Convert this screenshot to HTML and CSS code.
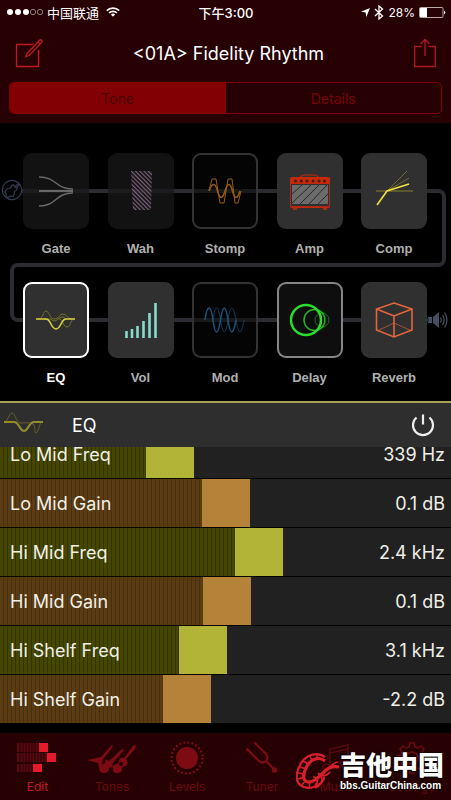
FILE: index.html
```html
<!DOCTYPE html>
<html lang="en">
<head>
    <meta charset="utf-8">
    <meta name="viewport" content="width=device-width, initial-scale=1">
    <title>Fidelity Rhythm</title>
    <link rel="stylesheet" href="styles.css">
</head>
<body>
<div class="app">
    <header class="top">
        <div class="status">
            <div class="status-left">
                <svg width="38" height="8" viewBox="0 0 38 8"><g fill="#fff"><circle cx="4" cy="4" r="3"/><circle cx="12" cy="4" r="3"/><circle cx="20" cy="4" r="3"/></g><g fill="none" stroke="#a99" stroke-width=".8"><circle cx="27" cy="4" r="2.7"/><circle cx="34" cy="4" r="2.7"/></g></svg>
                <span>中国联通</span>
                <svg class="wifi" width="14" height="10" viewBox="0 0 14 10"><g fill="none" stroke="#fff" stroke-width="1.7"><path d="M.8 3.6a8.8 8.8 0 0 1 12.4 0"/><path d="M3.1 6a5.5 5.5 0 0 1 7.8 0"/></g><path d="M4.9 7.6a3 3 0 0 1 4.2 0L7 9.8z" fill="#fff"/></svg>
            </div>
            <b class="time">下午3:00</b>
            <div class="status-right">
                <svg width="9" height="9" viewBox="0 0 9 9"><path d="M9 0 5.3 9 4.6 4.5 0 3.7z" fill="#fff"/></svg>
                <svg width="10" height="15" viewBox="0 0 10 15"><path d="M1 4l7.5 7L5 14V1l3.500 3L1 11" fill="none" stroke="#fff" stroke-width="1.3"/></svg>
                <span>28%</span>
                <svg width="27" height="11" viewBox="0 0 27 11"><rect x=".5" y=".5" width="23.500" height="10" rx="1" fill="none" stroke="#b9a9a9"/><path d="M1 1h7v9H1z" fill="#fff"/><path d="M25 3.500q2.500 2 0 4z" fill="#fff"/></svg>
            </div>
        </div>
        <div class="title-bar">
            <button class="icon-btn" aria-label="Edit name">
                <svg width="30" height="30" viewBox="0 0 30 30"><g fill="none" stroke="#c11a22" stroke-width="1.300"><path d="M19.500 6.500H2.500v22h22V12"/><path d="M13 15.500 25.500 2.200q1-.9 2.100.1t.1 2.100L15 17.500l-3.200 1.200zM24 4l2.200 2.200"/></g></svg>
            </button>
            <h1>&lt;01A&gt; Fidelity Rhythm</h1>
            <button class="icon-btn" aria-label="Share">
                <svg width="24" height="30" viewBox="0 0 24 30"><g fill="none" stroke="#ad1a26" stroke-width="1.300"><path d="M8.500 8.500H1.700v20h20.600v-20h-6.800M12 18V1.500M7.500 6 12 1.500 16.500 6"/></g></svg>
            </button>
        </div>
        <div class="segment">
            <button class="on">Tone</button>
            <button>Details</button>
        </div>
    </header>

    <section class="chain">
        <svg class="jack" width="22" height="22" viewBox="0 0 22 22"><g fill="none" stroke="#303a52" stroke-width="1.200"><circle cx="11" cy="11" r="9.700"/><path d="M18 4.500l-4.500 3.200-1-2-2 .8-.8 2.200-3.700 1.200-2.200 3 1.500 2-.5 2.500 2.500 1.200 2.200-1.500 2.500.2 1.500-2.500-.3-2.300 2.300-1.300.7-2.200-1.500-.3 4-3z"/></g></svg>
        <svg class="speaker" width="20" height="20" viewBox="0 0 20 20"><path d="M0 7h4v6H0zM5 7l6-5v16l-6-5z" fill="#465060"/><g fill="none" stroke="#465060" stroke-width="1.200"><path d="M12.500 7.500q1.500 2.500 0 5M14.500 5q3.200 5 0 10M16.500 2.500q5 7.500 0 15"/></g></svg>
        <div class="row">
            <button class="fx off">
                <span class="tile"><svg viewBox="0 0 66 76"><g fill="none" stroke="#696969" stroke-width="1.500"><path d="M16 24c18 0 16 12 34 12M16 53c18 0 16-13 34-13"/><path d="M16 38h34" stroke-width="2"/></g></svg></span>
                Gate
            </button>
            <button class="fx off">
                <span class="tile"><svg viewBox="0 0 66 76"><defs><pattern id="hatch" width="3" height="3" patternUnits="userSpaceOnUse" patternTransform="rotate(-45)"><path d="M0 0v3" stroke="#7b627c" stroke-width="2.400"/></pattern></defs><path d="M23 18h21l-1 39H25z" fill="url(#hatch)"/></svg></span>
                Wah
            </button>
            <button class="fx outline">
                <span class="tile"><svg viewBox="0 0 66 76"><g fill="none" stroke="#975c12"><path d="M17 38l3-12h4l4 24h4l4-24h4l3 24h3l3-12" stroke-width="1"/><path d="M17 38q5-13 8.500 0t7.500 0 7.500 0 7.500 0" stroke-width="1.600"/></g></svg></span>
                Stomp
            </button>
            <button class="fx">
                <span class="tile"><svg viewBox="0 0 66 76"><path d="M24 24q0-2 4-2h9q4 0 4 2" fill="none" stroke="#c4290c" stroke-width="1.200"/><rect x="13" y="24" width="40" height="31" rx="2" fill="#c4290c"/><path d="M14 31h38v22H14z" fill="#303030"/><path d="M15 32h36v19H15z" fill="#6b6b6b"/><path d="M15 41l10-9M15 50l19-18M23 51l19-19M32 51l18-19M41 51l10-10" stroke="#282828" stroke-width="1"/><g fill="#51180e"><circle cx="18.500" cy="28" r="1.500"/><circle cx="24.300" cy="28" r="1.500"/><circle cx="30" cy="28" r="1.500"/><circle cx="36" cy="28" r="1.500"/><circle cx="42" cy="28" r="1.500"/><circle cx="47.500" cy="28" r="1.500"/></g><path d="M13.500 31v22.500h39V31" fill="none" stroke="#a92b16"/><path d="M16 55h4v2h-4zM46 55h4v2h-4z" fill="#a92b16"/></svg></span>
                Amp
            </button>
            <button class="fx">
                <span class="tile"><svg viewBox="0 0 66 76"><g fill="none" stroke="#8a812b"><path d="M15 38h37"/><path d="M26 38l20-20M26 38l22-13" opacity=".7"/></g><path d="M16 52l10-14 22-7" fill="none" stroke="#f2e144" stroke-width="1.600"/></svg></span>
                Comp
            </button>
        </div>
        <div class="row">
            <button class="fx selected">
                <span class="tile"><svg viewBox="0 0 66 76"><g fill="none" stroke="#77752b"><path d="M16 37c4 0 4-8 7-8s4 8 8 8c5 0 5-5 9-5s4 5 9 5M21 37h7q3 4 7 0 4-4 8 0M36 37c4 0 4 8 8 8s3-7 7-8"/></g><path d="M13 37h10c5 0 5 10 10 10s5-10 10-10h9" fill="none" stroke="#d8d43b" stroke-width="1.600"/></svg></span>
                EQ
            </button>
            <button class="fx">
                <span class="tile"><svg viewBox="0 0 66 76"><path d="M18.500 56v-7M24 56v-9M29.500 56V44M35.500 56V39M41.500 56V31M47.500 56V21" stroke="#86dccb" stroke-width="2.600"/></svg></span>
                Vol
            </button>
            <button class="fx outline">
                <span class="tile"><svg viewBox="0 0 66 76"><g fill="none" stroke="#195481"><path d="M13 38c2-16 6-16 8 0s5 16 7.500 0 5-16 7.500 0 5 16 8 0" stroke-width="1.500"/><path d="M21 38c2-16 5-16 7.500 0s5 16 7.500 0 5-16 8 0 5 16 8 0" opacity=".65"/></g></svg></span>
                Mod
            </button>
            <button class="fx bright">
                <span class="tile"><svg viewBox="0 0 66 76"><g fill="none" stroke="#2bdc2d"><circle cx="45" cy="38" r="7" opacity=".45"/><circle cx="37.500" cy="38" r="10.500" stroke-width="1.500" opacity=".8"/><circle cx="29" cy="38" r="15" stroke-width="2.500"/></g></svg></span>
                Delay
            </button>
            <button class="fx">
                <span class="tile"><svg viewBox="0 0 66 76"><g fill="none" stroke="#e4663c"><path d="M33 41L16 49M33 41l18 8" stroke-width="1" opacity=".65"/><path d="M33 21l18 6v21l-18 7-17.500-7V27zM15.500 27L33 34l18-7M33 34v21" stroke-width="1.600"/></g></svg></span>
                Reverb
            </button>
        </div>
    </section>

    <section class="panel">
        <div class="panel-head">
            <svg width="44" height="28" viewBox="0 0 44 28"><g fill="none" stroke="#66622a"><path d="M4 11c4 0 5-9 8-9s4 9 8 10c6 0 8-1 13 1 3 2 1 9 3 9s3-7 5-11"/></g><path d="M4 11h10c5 0 6 9 10 9s5-9 10-9h9" fill="none" stroke="#928e2c" stroke-width="2"/></svg>
            <h2>EQ</h2>
            <button class="power" aria-label="Power">
                <svg width="24" height="24" viewBox="0 0 24 24"><path d="M5.500 4.500a10 10 0 1 0 13 0M12 1.500v10" fill="none" stroke="#eee" stroke-width="2.200"/></svg>
            </button>
        </div>
        <div class="params">
            <div class="param"><label for="p1">Lo Mid Freq</label><output for="p1">339 Hz</output><input id="p1" type="range" max="1000" value="362" style="--v:.362"></div>
            <div class="param gain"><label for="p2">Lo Mid Gain</label><output for="p2">0.1 dB</output><input id="p2" type="range" max="1000" value="502" style="--v:.502"></div>
            <div class="param"><label for="p3">Hi Mid Freq</label><output for="p3">2.4 kHz</output><input id="p3" type="range" max="1000" value="583" style="--v:.583"></div>
            <div class="param gain"><label for="p4">Hi Mid Gain</label><output for="p4">0.1 dB</output><input id="p4" type="range" max="1000" value="504" style="--v:.504"></div>
            <div class="param"><label for="p5">Hi Shelf Freq</label><output for="p5">3.1 kHz</output><input id="p5" type="range" max="1000" value="443" style="--v:.443"></div>
            <div class="param gain"><label for="p6">Hi Shelf Gain</label><output for="p6">-2.2 dB</output><input id="p6" type="range" max="1000" value="404" style="--v:.404"></div>
        </div>
    </section>

    <nav class="tabs">
        <a href="#" class="active">
            <svg width="44" height="34" viewBox="0 0 44 34"><path d="M2 2h22v9H2zM2 12h30v9H2zM2 23h16v8H2z" fill="#560910"/><path d="M5 2v29M8 2v29M11 2v29M14 2v29M17 2v29M20 2v19M23 2v19M26 12v9M29 12v9" stroke="#2d0005"/><path d="M24 2h9v9h-9zM32 12h9v9h-9zM18 23h9v8h-9z" fill="#e21c2b"/></svg>
            Edit
        </a>
        <a href="#">
            <svg width="50" height="34" viewBox="0 0 50 34"><g fill="#7c0b14"><path d="M0 19l14-3L24 5l2-1-1 3-9 11-3 13-2-9z"/><path d="M13 27q0-4 4-4 2-2 1-5l4 2L35 8l2 1-12 14 1 3-4 1q0 5-5 5-5 0-4-5z"/><path d="M26 27q0-4 4-4 2-1 2-4 2-3 5-2L46 5l3-1-1 4-9 10q3 4 0 7-4 0-4 3 0 4-5 4-5 0-4-5z"/></g><circle cx="34" cy="23" r="2" fill="#290003"/></svg>
            Tones
        </a>
        <a href="#">
            <svg width="36" height="34" viewBox="0 0 36 34"><circle cx="18" cy="17" r="11" fill="#7c0b14"/><circle cx="18" cy="17" r="15.500" fill="none" stroke="#8c0c16" stroke-width="2" stroke-dasharray="1.700 2.360"/></svg>
            Levels
        </a>
        <a href="#">
            <svg width="34" height="34" viewBox="0 0 34 34"><g fill="none" stroke="#7c0b14" stroke-width="2.200"><path d="M2 8l12 12q3 3 7 0 3-4 0-7L10 2M21 20l8 8" stroke-linecap="round"/></g><circle cx="29.500" cy="29" r="2.800" fill="#7c0b14"/></svg>
            Tuner
        </a>
        <a href="#">
            <svg width="34" height="34" viewBox="0 0 34 34"><g fill="none" stroke="#550810" stroke-width="1.500"><path d="M10 25V8l18-4v17M10 12l18-4"/><ellipse cx="6.500" cy="26" rx="4" ry="3"/><ellipse cx="24.500" cy="22" rx="4" ry="3"/></g></svg>
            Music
        </a>
        <a href="#">
            <svg width="34" height="34" viewBox="0 0 34 34"><g fill="none" stroke="#6d0a12" stroke-width="1.500"><path d="M15 2h4l1 4 3 1 3-2 3 3-2 3 1 3 4 1v4l-4 1-1 3 2 3-3 3-3-2-3 1-1 4h-4l-1-4-3-1-3 2-3-3 2-3-1-3-4-1v-4l4-1 1-3-2-3 3-3 3 2 3-1z"/><circle cx="17" cy="17" r="6"/></g></svg>
            Settings
        </a>
    </nav>

    <div class="mark">
        <svg width="44" height="40" viewBox="0 0 44 40"><g fill="none" stroke="#d8202b"><path d="M29 5C21-1 9 3 4 13S-1 32 8 35s20-4 20-10" stroke-width="2.200"/><path d="M29 9C23 4 15 7 11 14s-5 15 1 16 13-7 17-11 9-5 14-4" stroke-width="3.200"/><path d="M7 9l5 3M4 15l6 2M2 21l6 1M2 27l6-2M6 33l4-5M14 4l2 5M21 2l0 5M13 36l1-6" stroke-width="1.500"/><path d="M22 21c3 4 8 4 12-1M25 25c3 4-1 9-6 11M17 25c5 0 6 5 2 8M31 17c4-2 7-7 11-7" stroke-width="1.700"/></g></svg>
        <div>
            <b>吉他中国</b>
            <span>bbs.GuitarChina.com</span>
        </div>
    </div>
</div>
</body>
</html>
```
FILE: styles.css
```css
*, *::before, *::after{ margin: 0; padding: 0; box-sizing: border-box;}
body{ background: #000; color: #fff; font-family: Inter, "Noto Sans CJK SC", sans-serif;}
button{ background: none; border: 0; color: inherit; font: inherit; cursor: pointer;}
svg{ display: block; flex: none;}
.app{ position: relative; min-height: 100vh; display: flex; flex-direction: column;}

/* header */
.top{ background: #260002; padding-bottom: 9px;}
.status{ display: grid; grid-template-columns: 1fr auto 1fr; align-items: center; height: 24px; padding: 0 5px 0 6px; font-size: 12px;}
.status-left, .status-right{ display: flex; align-items: center; gap: 3px;}
.status-left{ font-size: 13px;}
.status-right{ justify-content: flex-end; gap: 4px;}
.wifi{ margin-left: 4px;}
.time{ font-weight: 500; font-size: 13px;}
.title-bar{ display: flex; align-items: center; justify-content: space-between; height: 58px; padding: 0 14px;}
.title-bar h1{ font-size: 18px; font-weight: 400;}
.segment{ display: flex; margin: 0 9px; height: 32px; border: 1px solid #820003; border-radius: 5px; overflow: hidden;}
.segment button{ flex: 1; color: #760507; font-size: 14px;}
.segment .on{ background: #820003; color: #480002;}

/* signal chain */
.chain{ position: relative; padding: 30px 24px 14px 23px; height: 278px;}
.chain::before, .chain::after{ content: ""; position: absolute; border: 4px solid #2b2b31;}
.chain::before{ top: 66px; left: 22px; right: 5px; height: 78px; border-left: 0; border-radius: 0 8px 8px 0;}
.chain::after{ top: 140px; left: 10px; right: 22px; height: 59px; border-right: 0; border-radius: 8px 0 0 8px;}
.jack{ position: absolute; left: 1px; top: 56px;}
.speaker{ position: absolute; right: 3px; top: 187px;}
.row{ position: relative; z-index: 1; display: flex; justify-content: space-between; height: 129px;}
.fx{ width: 66px; display: flex; flex-direction: column; align-items: center; justify-content: flex-start; gap: 12px; color: #b0b0b0; font: bold 13px/16px "Liberation Sans", Arial, sans-serif;}
.tile{ width: 66px; height: 76px; border-radius: 9px; background: #303030; overflow: hidden; flex: none;}
.tile svg{ width: 66px; height: 76px;}
.off .tile{ background: rgba(24,24,24,.75);}
.outline .tile{ background: rgba(8,8,8,.5); box-shadow: inset 0 0 0 2px #333;}
.bright .tile{ background: #0e0e0e; box-shadow: inset 0 0 0 2px #858585;}
.selected{ color: #fff;}
.selected .tile{ box-shadow: inset 0 0 0 2px #fff;}

/* parameters */
.panel-head{ position: relative; z-index: 2; display: flex; align-items: center; height: 46px; padding: 0 16px 0 0; background: #2e2e2e; border-top: 2px solid #a5a25a;}
.panel-head h2{ flex: 1; margin-left: 28px; font-size: 18px; font-weight: 400;}
.params{ overflow: hidden;}
.param{ display: grid; height: 49px; align-items: center; border-bottom: 1px solid #000; background: #212121; font-size: 18px; --thumb: #b2b438; --a: #454600; --b: #333400;}
.param:first-child{ margin-top: -17px;}
.gain{ --thumb: #b58239; --a: #5b3b12; --b: #46300f;}
.param > *{ grid-area: 1 / 1;}
.param label, .param output{ z-index: 1; pointer-events: none; color: #f0f0e8;}
.param label{ padding-left: 10px;}
.param output{ justify-self: end; padding-right: 6px;}
.param input{ -webkit-appearance: none; appearance: none; width: 100%; height: 48px; background: repeating-linear-gradient(90deg, var(--a) 0 3px, var(--b) 3px 4px) no-repeat 0 0 / calc((100% - 48px) * var(--v)) 100%;}
.param input::-webkit-slider-thumb{ -webkit-appearance: none; width: 48px; height: 48px; background: var(--thumb);}
.param input::-moz-range-thumb{ width: 48px; height: 48px; border: 0; border-radius: 0; background: var(--thumb);}

/* bottom tabs */
.tabs{ display: grid; grid-template-columns: repeat(6, 1fr); margin-top: auto; height: 67px; padding: 8px 2px 0 0; background: #260002;}
.tabs a{ display: flex; flex-direction: column; align-items: center; gap: 3px; color: #6a0a11; font-size: 12px; line-height: 18px; text-decoration: none;}
.tabs .active{ color: #c41825;}

/* site mark over the tabs */
.mark{ position: absolute; right: 7px; bottom: 6px; display: flex; align-items: center; pointer-events: none;}
.mark b, .mark span{ display: block; white-space: nowrap; text-shadow: 0 0 2px #000, 1px 1px 1px #000;}
.mark b{ font: 900 26px/28px "Noto Sans CJK SC", sans-serif;}
.mark span{ font: bold 10px/16px "Liberation Sans", sans-serif;}
```
